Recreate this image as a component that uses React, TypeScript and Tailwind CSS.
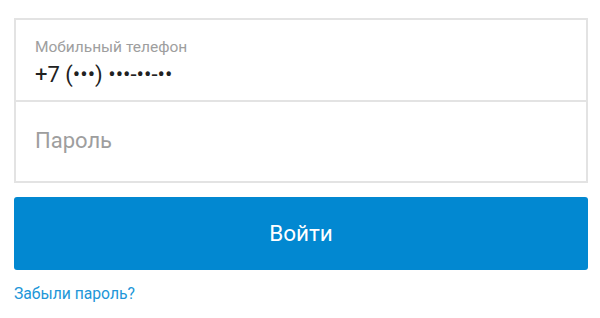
export default function App() {
  return (
    <div className="min-h-screen bg-white pl-[14px] pr-[12px] pt-[18px] font-['Roboto',sans-serif]">
      <div className="border-2 border-[#e3e3e3] bg-white">
        <div className="h-[82px] border-b-2 border-[#e3e3e3] px-[19px] pt-[17px]">
          <p className="text-[15.5px] leading-[20px] text-[#9e9e9e]">Мобильный телефон</p>
          <p className="mt-[4px] text-[22px] leading-[28px] text-[#212121]">+7 (•••) •••-••-••</p>
        </div>
        <div className="flex h-[79px] items-center px-[19px] pb-[2px]">
          <p className="text-[22px] text-[#9e9e9e]">Пароль</p>
        </div>
      </div>
      <button className="mt-[14px] flex h-[73px] w-full items-center justify-center rounded-[3px] bg-[#0288d1] text-[22.5px] text-white">
        Войти
      </button>
      <a className="mt-[12px] block text-[15.7px] text-[#2196d8]">Забыли пароль?</a>
    </div>
  );
}
